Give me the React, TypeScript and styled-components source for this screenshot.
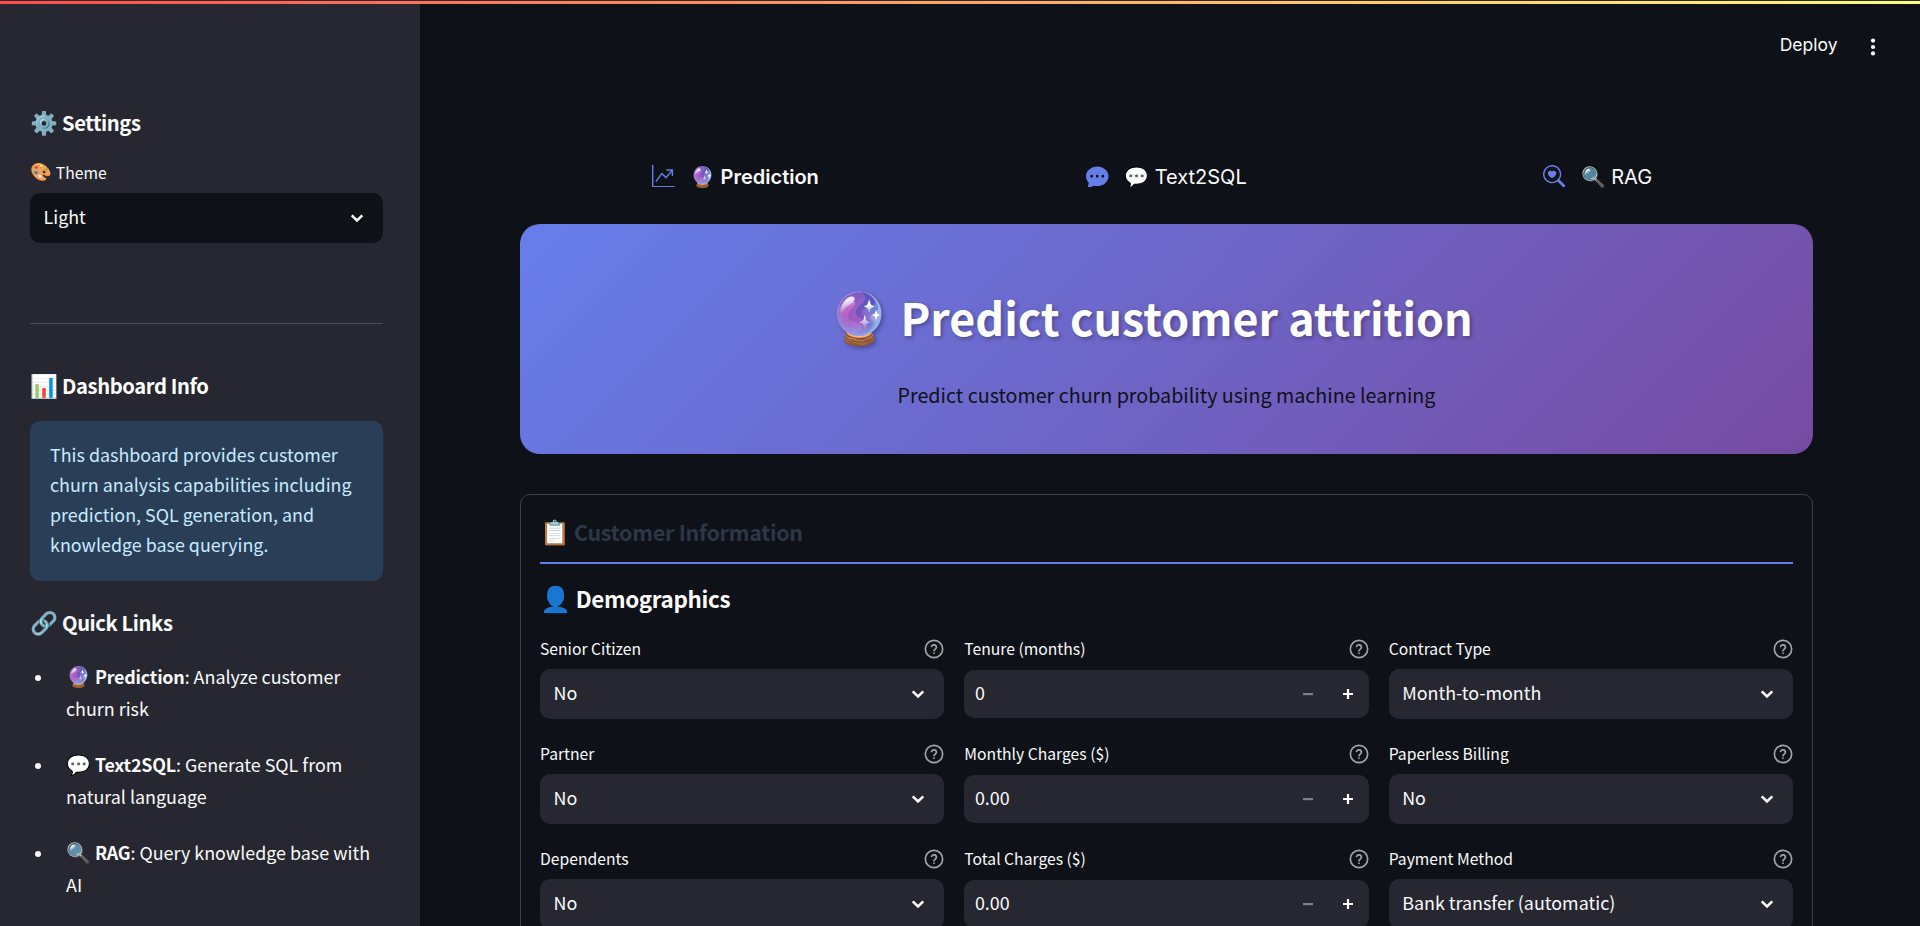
import React from 'react';
import styled, { createGlobalStyle } from 'styled-components';
import { BsGraphUpArrow, BsChatDotsFill, BsSearchHeart } from 'react-icons/bs';

const sans = `'Noto Sans CJK SC', 'Noto Color Emoji', sans-serif`;
const ui = `Inter, 'Noto Color Emoji', sans-serif`;

const GlobalStyle = createGlobalStyle`
  * { box-sizing: border-box; }
  html, body { margin: 0; padding: 0; height: 100%; overflow: hidden; background: #0e1117; }
  h1, h2, h3, p, ul { margin: 0; padding: 0; font-weight: inherit; }
`;

const Page = styled.div`
  display: grid;
  grid-template-columns: 420px 1fr;
  height: 926px;
  overflow: hidden;
  position: relative;
  background: #0e1117;
  color: #fafafa;
  font-family: ${sans};
  font-size: 17.9px;
`;

const Decoration = styled.div`
  position: absolute;
  inset: 0 0 auto 0;
  height: 4px;
  border-top: 1px solid #2b2c33;
  background: linear-gradient(90deg, #ff4b4b, #fffd80) padding-box;
`;

const Sidebar = styled.aside`
  background: #262730;
  padding: 105px 37px 0 30px;
  overflow: hidden;
`;

const Emoji = styled.span<{ $size: number; $gap: number }>`
  font-family: 'Noto Color Emoji', sans-serif;
  font-size: ${p => p.$size}px;
  font-weight: 400;
  letter-spacing: 0;
  line-height: 1;
  margin-right: ${p => p.$gap}px;
`;

/* Lifts a run of text above the centre line of its row. */
const Lifted = styled.span<{ $by: number }>`
  padding-bottom: ${p => p.$by * 2}px;
`;

const SideHeading = styled.h3<{ $top?: number }>`
  display: flex;
  align-items: center;
  height: 36px;
  margin-top: ${p => p.$top ?? 0}px;
  color: #fff;
  font-size: 20.2px;
  font-weight: 600;
  letter-spacing: -0.4px;
  line-height: 36px;
`;

const SideLabel = styled.div`
  display: flex;
  align-items: center;
  margin: 19px 0 7px;
  height: 26px;
  font-size: 15.7px;
  line-height: 26px;
`;

const SelectBox = styled.div<{ $dark?: boolean }>`
  display: flex;
  align-items: center;
  justify-content: space-between;
  height: 50px;
  padding: 0 16px 0 13.5px;
  border-radius: 10px;
  background: ${p => (p.$dark ? '#0e1117' : '#262730')};
  line-height: 28px;
`;

const Rule = styled.hr`
  height: 1px;
  border: 0;
  margin: 80px 0 0;
  background: #4d4e56;
`;

const Info = styled.p`
  margin-top: 17px;
  height: 160px;
  padding: 18px 20px 20px;
  border-radius: 10px;
  background: #2b3e57;
  color: #c7ebff;
  line-height: 30px;
  white-space: nowrap;
`;

const Links = styled.ul`
  margin-top: 19px;
  list-style: none;
  line-height: 32px;
`;

const LinkItem = styled.li`
  display: grid;
  grid-template-columns: 36px 1fr;
  margin-bottom: 24px;
  white-space: nowrap;
  b { font-weight: 600; letter-spacing: -0.2px; }
`;

const Bullet = styled.span`
  width: 6px;
  height: 6px;
  margin: 15px 0 0 5px;
  border-radius: 50%;
  background: #fafafa;
`;

const Main = styled.main`
  padding: 0 107px 0 100px;
  overflow: hidden;
`;

const Toolbar = styled.header`
  display: flex;
  justify-content: flex-end;
  align-items: center;
  gap: 32px;
  height: 90px;
  margin-right: -62.5px;
  font-family: ${ui};
  font-size: 17.5px;
  svg { margin-top: 3px; }
`;

const Tabs = styled.nav`
  display: grid;
  grid-template-columns: repeat(3, 1fr);
  height: 134px;
  padding-top: 70px;
  font-family: ${ui};
  font-size: 20px;
`;

const Tab = styled.div<{ $active?: boolean }>`
  display: flex;
  justify-content: center;
  align-items: center;
  height: 32px;
  font-weight: ${p => (p.$active ? 600 : 400)};
  svg { color: #667eea; margin-right: 16px; }
`;

const TabText = styled.span`
  display: flex;
  align-items: center;
  padding-top: 2px;
`;

const Hero = styled.section`
  height: 230px;
  padding-top: 55px;
  border-radius: 20px;
  background: linear-gradient(135deg, #667eea 0%, #764ba2 100%);
  text-align: center;
`;

const HeroTitle = styled.h1`
  display: flex;
  justify-content: center;
  align-items: center;
  height: 80px;
  padding-right: 32px;
  color: #fff;
  font-size: 44.8px;
  font-weight: 700;
  line-height: 80px;
  text-shadow: 2px 2px 4px rgba(0, 0, 0, 0.3);
`;

const HeroSub = styled.p`
  margin-top: 18px;
  color: #0e1117;
  font-size: 19.7px;
  line-height: 36px;
`;

const Form = styled.section`
  margin-top: 40px;
  height: 700px;
  padding: 19px;
  border: 1px solid #3d4045;
  border-radius: 10px;
`;

const FormTitle = styled.h2`
  display: flex;
  align-items: center;
  height: 50px;
  padding-bottom: 10px;
  border-bottom: 2px solid #667eea;
  color: #2d3748;
  font-size: 21.5px;
  font-weight: 600;
  letter-spacing: -0.28px;
  line-height: 36px;
`;

const GroupTitle = styled.h3`
  display: flex;
  align-items: center;
  height: 36px;
  margin-top: 17px;
  color: #fff;
  font-size: 22.4px;
  font-weight: 600;
  letter-spacing: -0.35px;
  line-height: 36px;
`;

const Fields = styled.div`
  display: grid;
  grid-template-columns: repeat(3, 1fr);
  gap: 20px;
  margin-top: 19px;
`;

const Field = styled.div`
  height: 85px;
`;

const FieldLabel = styled.div`
  display: flex;
  justify-content: space-between;
  align-items: center;
  height: 26px;
  margin-bottom: 7px;
  font-size: 15.7px;
  line-height: 26px;
`;

const NumberBox = styled.div`
  display: flex;
  align-items: center;
  height: 48px;
  margin-top: 8px;
  padding: 0 15.6px 0 10.6px;
  border-radius: 10px;
  background: #262730;
  line-height: 28px;
  span { flex: 1; }
  svg + svg { margin-left: 30px; }
`;

const Chevron = () => (
  <svg width="20" height="20" viewBox="0 0 20 20" fill="none" stroke="#fafafa" strokeWidth="2.5" strokeLinecap="square">
    <path d="M5.6 8.2 10 12.4l4.4-4.2" />
  </svg>
);

const Help = () => (
  <svg width="20" height="20" viewBox="0 0 24 24" fill="none" stroke="#a3a4a8" strokeWidth="2" strokeLinecap="round" strokeLinejoin="round">
    <circle cx="12" cy="12" r="10.4" />
    <path d="M9.1 9a3 3 0 0 1 5.8 1c0 2-2.9 2.6-2.9 4M12 17h.01" />
  </svg>
);

const Minus = () => (
  <svg width="10" height="10" viewBox="0 0 10 10"><path d="M0 4h10v2.2H0z" fill="#7d7f8e" /></svg>
);

const Plus = () => (
  <svg width="10" height="10" viewBox="0 0 10 10"><path d="M3.9 0h2.2v3.9H10v2.2H6.1V10H3.9V6.1H0V3.9h3.9z" fill="#fff" /></svg>
);

const Kebab = () => (
  <svg width="6" height="18" viewBox="0 0 6 18" fill="#fafafa">
    <circle cx="3" cy="2.6" r="2.1" /><circle cx="3" cy="9" r="2.1" /><circle cx="3" cy="15.4" r="2.1" />
  </svg>
);

type FieldSpec = { label: string; value: string; number?: boolean };

const fields: FieldSpec[] = [
  { label: 'Senior Citizen', value: 'No' },
  { label: 'Tenure (months)', value: '0', number: true },
  { label: 'Contract Type', value: 'Month-to-month' },
  { label: 'Partner', value: 'No' },
  { label: 'Monthly Charges ($)', value: '0.00', number: true },
  { label: 'Paperless Billing', value: 'No' },
  { label: 'Dependents', value: 'No' },
  { label: 'Total Charges ($)', value: '0.00', number: true },
  { label: 'Payment Method', value: 'Bank transfer (automatic)' },
];

const links = [
  { emoji: '🔮', name: 'Prediction', first: ': Analyze customer', second: 'churn risk' },
  { emoji: '💬', name: 'Text2SQL', first: ': Generate SQL from', second: 'natural language' },
  { emoji: '🔍', name: 'RAG', first: ': Query knowledge base with', second: 'AI' },
];

const tabs = [
  { icon: BsGraphUpArrow, emoji: '🔮', name: 'Prediction', active: true },
  { icon: BsChatDotsFill, emoji: '💬', name: 'Text2SQL' },
  { icon: BsSearchHeart, emoji: '🔍', name: 'RAG' },
];

export default function App() {
  return (
    <>
      <GlobalStyle />
      <Page>
        <Sidebar>
          <SideHeading><Emoji $size={22.5} $gap={4}>⚙️</Emoji>Settings</SideHeading>
          <SideLabel><Emoji $size={17.5} $gap={4}>🎨</Emoji>Theme</SideLabel>
          <SelectBox $dark><Lifted $by={2}>Light</Lifted><Chevron /></SelectBox>
          <Rule />
          <SideHeading $top={44}><Emoji $size={22.5} $gap={4}>📊</Emoji>Dashboard Info</SideHeading>
          <Info>
            This dashboard provides customer<br />churn analysis capabilities including<br />
            prediction, SQL generation, and<br />knowledge base querying.
          </Info>
          <SideHeading $top={24}><Emoji $size={22.5} $gap={4}>🔗</Emoji>Quick Links</SideHeading>
          <Links>
            {links.map(l => (
              <LinkItem key={l.name}>
                <Bullet />
                <div><Emoji $size={20} $gap={4}>{l.emoji}</Emoji><b>{l.name}</b>{l.first}<br />{l.second}</div>
              </LinkItem>
            ))}
          </Links>
        </Sidebar>
        <Main>
          <Toolbar><Lifted $by={1}>Deploy</Lifted><Kebab /></Toolbar>
          <Tabs>
            {tabs.map(t => (
              <Tab key={t.name} $active={t.active}>
                <t.icon size={22.5} />
                <TabText><Emoji $size={20} $gap={5}>{t.emoji}</Emoji>{t.name}</TabText>
              </Tab>
            ))}
          </Tabs>
          <Hero>
            <HeroTitle><Emoji $size={50} $gap={10}>🔮</Emoji><Lifted $by={2.5}>Predict customer attrition</Lifted></HeroTitle>
            <HeroSub>Predict customer churn probability using machine learning</HeroSub>
          </Hero>
          <Form>
            <FormTitle><Emoji $size={24} $gap={4}>📋</Emoji><Lifted $by={1}>Customer Information</Lifted></FormTitle>
            <GroupTitle><Emoji $size={25} $gap={4.5}>👤</Emoji><Lifted $by={1}>Demographics</Lifted></GroupTitle>
            <Fields>
              {fields.map(f => (
                <Field key={f.label}>
                  <FieldLabel>{f.label}<Help /></FieldLabel>
                  {f.number
                    ? <NumberBox><Lifted $by={2}>{f.value}</Lifted><Minus /><Plus /></NumberBox>
                    : <SelectBox><Lifted $by={2}>{f.value}</Lifted><Chevron /></SelectBox>}
                </Field>
              ))}
            </Fields>
          </Form>
        </Main>
        <Decoration />
      </Page>
    </>
  );
}
